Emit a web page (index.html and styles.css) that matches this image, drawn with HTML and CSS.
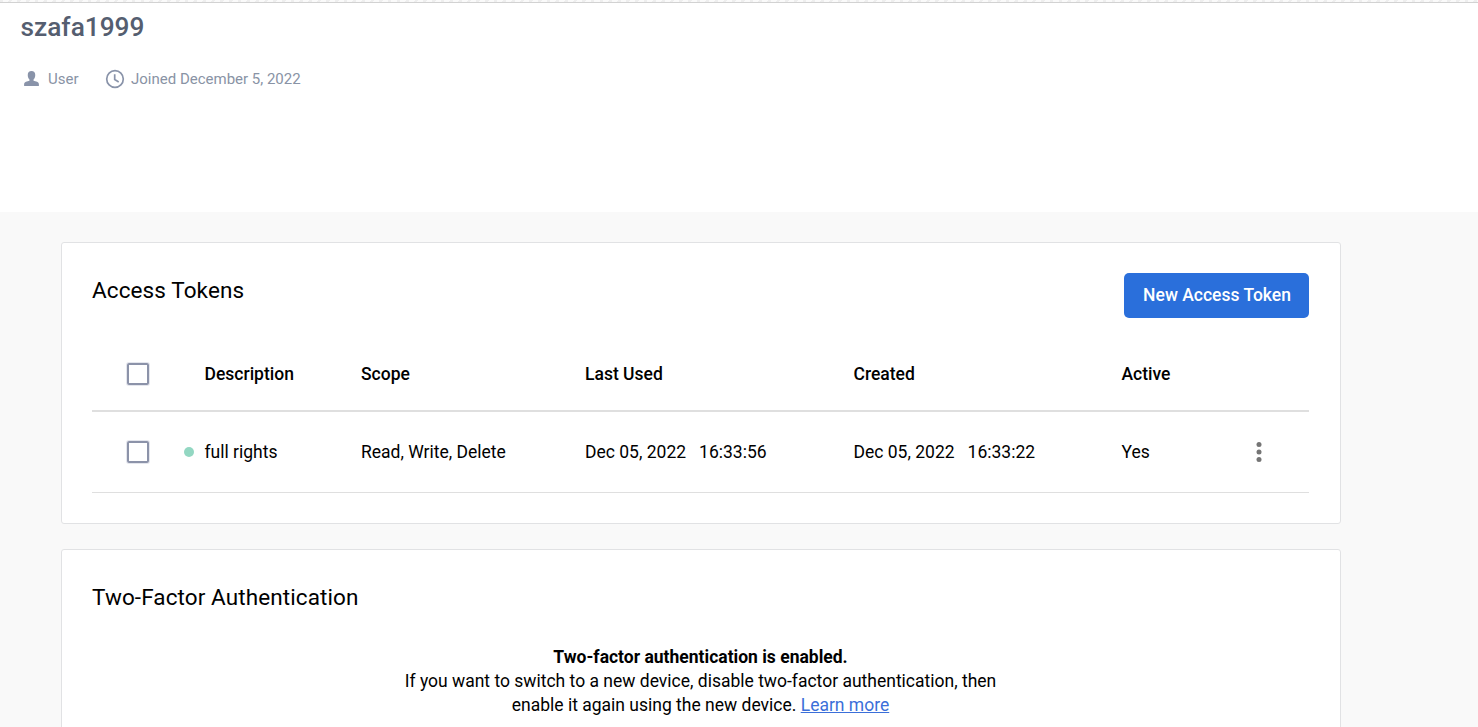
FILE: index.html
```html
<!DOCTYPE html>
<html lang="en">
<head>
<meta charset="utf-8">
<title>szafa1999</title>
<link rel="stylesheet" href="styles.css">
</head>
<body>
<header class="profile">
  <h1 class="name"><span>szafa1999</span></h1>
  <div class="meta">
    <svg class="icon-user" viewBox="0 0 14 14"><path d="M7 0C4.800 0 3.500 1.400 3.500 3.700c0 1.900.7 3.300 1.600 4.200v1.200L1.800 10C.7 10.500.1 11.300.1 12.400V14h13.800v-1.600c0-1.100-.6-1.900-1.700-2.400L8.900 9.100V7.900c.9-.9 1.600-2.300 1.600-4.200C10.500 1.400 9.200 0 7 0z"/></svg>
    <span class="role">User</span>
    <svg class="icon-clock" viewBox="0 0 20 20"><circle cx="10" cy="10" r="8.300"/><path d="M9.700 5.300v5.200l4 2.400"/></svg>
    <span class="joined">Joined December 5, 2022</span>
  </div>
</header>
<main class="content">
  <section class="card tokens">
    <div class="card-head">
      <h2 class="card-title"><span>Access Tokens</span></h2>
      <button class="new-token"><span>New Access Token</span></button>
    </div>
    <div class="table">
      <div class="row head">
        <span class="check"></span><span></span><span>Description</span><span>Scope</span><span>Last Used</span><span>Created</span><span>Active</span><span></span>
      </div>
      <div class="row">
        <span class="check"></span><span class="status"></span><span>full rights</span><span>Read, Write, Delete</span>
        <span class="date"><span>Dec 05, 2022</span><span>16:33:56</span></span>
        <span class="date"><span>Dec 05, 2022</span><span>16:33:22</span></span>
        <span>Yes</span>
        <svg class="more" viewBox="0 0 6 20"><circle cx="3" cy="2.500" r="2.500"/><circle cx="3" cy="10" r="2.500"/><circle cx="3" cy="17.500" r="2.500"/></svg>
      </div>
    </div>
  </section>
  <section class="card two-factor">
    <h2 class="card-title"><span>Two-Factor Authentication</span></h2>
    <div class="notice">
      <strong>Two-factor authentication is enabled.</strong>
      <span class="line">If you want to switch to a new device, disable two-factor authentication, then</span>
      <span class="line">enable it again using the new device. <a href="#">Learn more</a></span>
    </div>
  </section>
</main>
</body>
</html>
```
FILE: styles.css
```css
* { box-sizing: border-box; }
body {
  margin: 0;
  height: 727px;
  overflow: hidden;
  background: #f9f9f9;
  color: #000;
  font-family: Roboto, "Liberation Sans", sans-serif;
  font-size: 17.5px;
}
h1, h2 { margin: 0; font-weight: 400; }
.profile {
  height: 212px;
  padding: 9px 20.5px 0;
  background:
    repeating-linear-gradient(115deg, #eee 0 3px, #fafafa 3px 8px) 0 0 / 100% 2px no-repeat,
    linear-gradient(#f5f5f5 2px, #d2d2d2 2px, #d2d2d2 3px, #fff 3px);
}
.name { font-size: 26.25px; line-height: 36px; font-weight: 500; color: #555e70; }
.meta {
  display: flex;
  align-items: center;
  height: 20px;
  margin-top: 24px;
  padding-left: 3.5px;
  color: #8993a5;
  font-size: 15px;
  line-height: 20px;
}
.icon-user { width: 15px; height: 15px; fill: #8993a9; margin: 0 9px 2px 0; }
.role { width: 57px; }
.icon-clock { width: 20px; height: 20px; margin: 0 6px 1px 0; fill: none; stroke: #8993a9; stroke-width: 1.7; }
.content { display: flex; flex-direction: column; gap: 25px; width: 1280px; height: 515px; overflow: hidden; padding-top: 30px; margin-left: 61px; }
.card { flex: none; background: #fff; border: 1px solid #e1e2e4; border-radius: 3px; padding: 30px; }
.tokens { height: 282px; }
.card-head { display: flex; justify-content: space-between; align-items: flex-start; margin-right: 1px; }
.card-title { font-size: 22.5px; line-height: 34px; letter-spacing: .1px; }
.new-token {
  width: 185px;
  height: 45px;
  padding: 0 0 0 1px;
  border: 0;
  border-radius: 5px;
  background: #2a6fdb;
  color: #fff;
  font: 500 17.5px/45px Roboto, sans-serif;
}
.table { margin: 18px 1px 0 0; }
.row {
  display: grid;
  grid-template-columns: 92px 20.5px 156.5px 224px 268.5px 268px 133.5px 1fr;
  align-items: center;
  height: 81px;
  border-bottom: 1px solid #dfdfdf;
}
.head { height: 76px; padding-top: 2px; border-bottom-width: 2px; font-weight: 500; }
.check {
  width: 22px;
  height: 22px;
  margin-left: 35px;
  border: 2px solid #8c93a9;
  border-radius: 2px;
  box-shadow: 0 0 0 1px #e4e6ed;
}
.status { width: 10px; height: 10px; border-radius: 50%; background: #93d7c2; }
.date { display: flex; gap: 13px; }
.more { width: 6px; height: 20px; fill: #757575; margin-left: 1px; }
.two-factor { height: 300px; }
.notice { display: flex; flex-direction: column; align-items: center; margin-top: 31px; line-height: 24px; margin-right: 1px; }
.notice strong { font-weight: 700; }
.notice a { color: #3b6fd9; text-decoration: underline; }
```
